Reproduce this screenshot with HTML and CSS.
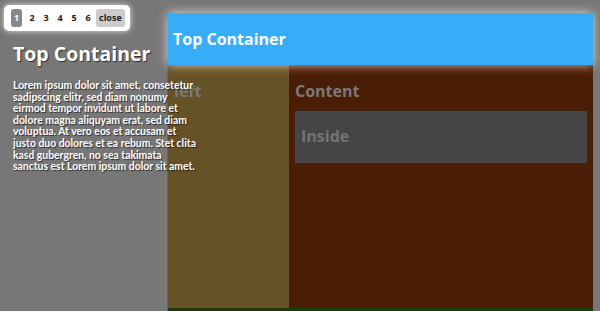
FILE: index.html
```html
<!DOCTYPE html>
<html lang="en">

<head>
    <meta charset="UTF-8">
    <title>Layout Demo</title>
    <link rel="stylesheet" href="styles.css">
</head>

<body>
    <div class="stage">
        <div class="pager">
            <span class="page active">1</span>
            <span class="page">2</span>
            <span class="page">3</span>
            <span class="page">4</span>
            <span class="page">5</span>
            <span class="page">6</span>
            <span class="close">close</span>
        </div>

        <div class="info">
            <h1>Top Container</h1>
            <p>Lorem ipsum dolor sit amet, consetetur sadipscing elitr, sed diam nonumy eirmod tempor invidunt ut labore et dolore magna aliquyam erat, sed diam voluptua. At vero eos et accusam et justo duo dolores et ea rebum. Stet clita kasd gubergren, no sea takimata sanctus est Lorem ipsum dolor sit amet.</p>
        </div>

        <div class="panel">
            <div class="top-container">Top Container</div>
            <div class="columns">
                <div class="left">
                    <h2>left</h2>
                </div>
                <div class="content">
                    <h2>Content</h2>
                    <div class="inside">Inside</div>
                </div>
            </div>
            <div class="bottom"></div>
        </div>
    </div>
</body>

</html>
```

FILE: styles.css
```css
body {
    background-color: #777777;
    margin: 0;
    font-family: "Open Sans", "DejaVu Sans", sans-serif;
    overflow: hidden;
}

.stage {
    position: relative;
    height: 311px;
}

.pager {
    position: relative;
    z-index: 3;
    display: inline-flex;
    align-items: center;
    margin: 5px 0 0 4px;
    padding: 4px 5px 4px 7px;
    background-color: white;
    border-radius: 5px;
    box-shadow: 0 0 6px rgba(255, 255, 255, 0.8);
    font-size: 9px;
    font-weight: bold;
    color: #222;
}

.page {
    width: 14px;
    text-align: center;
    line-height: 18px;
}

.page.active {
    width: 11px;
    margin-right: 3px;
    background-color: #888;
    color: white;
    border-radius: 3px;
}

.close {
    margin-left: 1px;
    padding: 0 3px;
    line-height: 18px;
    background-color: #ccc;
    border-radius: 3px;
}

.info {
    position: relative;
    z-index: 3;
    width: 186px;
    padding: 0 13px;
    color: white;
    text-shadow: 1px 1px 1px rgba(0, 0, 0, 0.6);
}

.info h1 {
    margin: 10px 0 13px;
    font-size: 19.5px;
    line-height: 26px;
    white-space: nowrap;
}

.info p {
    margin: 0;
    font-family: "Lato", "Open Sans", sans-serif;
    font-size: 10.4px;
    font-weight: bold;
    line-height: 11.6px;
}

.panel {
    position: absolute;
    z-index: 1;
    top: 13px;
    left: 168px;
    right: 7px;
    bottom: -10px;
    display: flex;
    flex-direction: column;
    box-shadow: -1px 0 0 rgba(0, 0, 0, 0.15);
}

.top-container {
    position: relative;
    z-index: 2;
    height: 52px;
    box-sizing: border-box;
    padding: 15px 0 0 5px;
    background-color: #38abf9;
    color: white;
    font-size: 16px;
    font-weight: bold;
    line-height: 22px;
    box-shadow: 0 0 10px rgba(255, 255, 255, 0.75);
}

.columns {
    flex: 1;
    display: flex;
}

.columns h2 {
    margin: 0;
    font-size: 16px;
    line-height: 22px;
    color: #7a7a7a;
}

.left {
    width: 121px;
    padding: 15px 6px;
    box-sizing: border-box;
    background-color: #665227;
}

.content {
    flex: 1;
    padding: 15px 6px;
    background-color: #4a1e06;
}

.inside {
    margin-top: 9px;
    height: 52px;
    box-sizing: border-box;
    padding: 14px 0 0 6px;
    background-color: #454545;
    color: #747474;
    font-size: 16px;
    font-weight: bold;
    line-height: 22px;
}

.bottom {
    height: 13px;
    background-color: #1b3a0c;
}
```
